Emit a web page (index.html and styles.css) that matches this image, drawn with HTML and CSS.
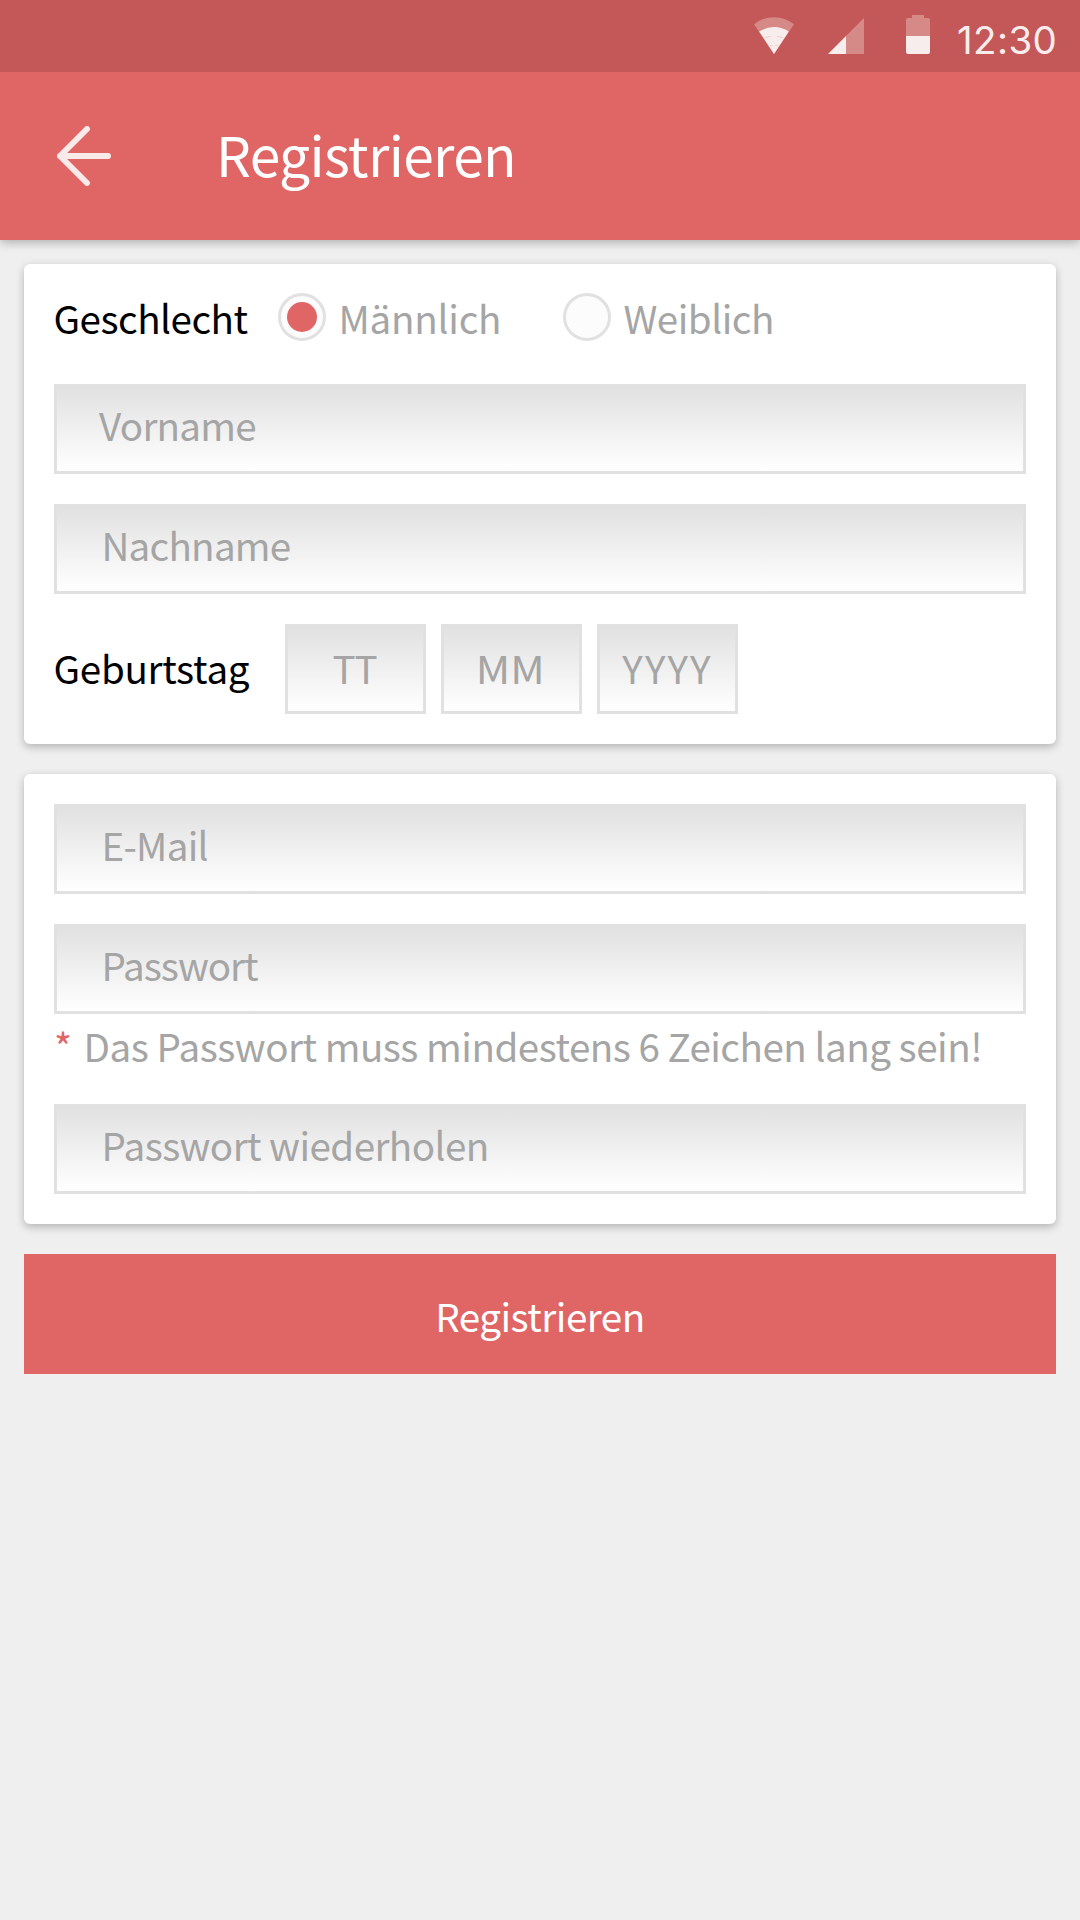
FILE: index.html
```html
<!DOCTYPE html>
<html lang="de">
<head>
<meta charset="utf-8">
<title>Registrieren</title>
<link rel="stylesheet" href="styles.css">
</head>
<body>
<div class="statusbar">
  <svg class="wifi" width="40" height="72" viewBox="0 0 40 72">
    <path class="dim" d="M0 24.3A32 32 0 0 1 40 24.3L20 54Z"/>
    <path class="lit" d="M5.2 31.6A26 26 0 0 1 34.8 31.6L20 54Z"/>
    <path class="wave" d="M10.5 38Q14 36.4 17 36.4M23 36.4Q26 36.4 29.5 38M15.5 46Q17 45.3 19 45.3M21 45.3Q23 45.3 24.5 46"/>
  </svg>
  <svg class="signal" width="36" height="72" viewBox="0 0 36 72">
    <path class="dim" d="M18 36L36 18V54H18Z"/>
    <path class="lit" d="M0 54L18 36V54Z"/>
  </svg>
  <svg class="battery" width="24" height="72" viewBox="0 0 24 72">
    <path class="dim" d="M6 15H18V18H22A2 2 0 0 1 24 20V36H0V20A2 2 0 0 1 2 18H6Z"/>
    <path class="lit" d="M0 36H24V52A2 2 0 0 1 22 54H2A2 2 0 0 1 0 52Z"/>
  </svg>
  <span class="clock">12:30</span>
</div>
<header class="toolbar">
  <svg class="back" width="54" height="60" viewBox="0 0 54 60">
    <path d="M30 3L3 30L30 57M3 30H51"/>
  </svg>
  <h1 class="title">Registrieren</h1>
</header>
<main class="form">
  <section class="card card-person">
    <div class="row gender">
      <span class="label label-gender">Geschlecht</span>
      <span class="radio checked"></span>
      <span class="option option-male">Männlich</span>
      <span class="radio"></span>
      <span class="option option-female">Weiblich</span>
    </div>
    <div class="field field-first"><span>Vorname</span></div>
    <div class="field field-last"><span>Nachname</span></div>
    <div class="row birthday">
      <span class="label label-birthday">Geburtstag</span>
      <div class="field date"><span class="day">TT</span></div>
      <div class="field date"><span class="month">MM</span></div>
      <div class="field date"><span class="year">YYYY</span></div>
    </div>
  </section>
  <section class="card card-account">
    <div class="field field-mail"><span>E-Mail</span></div>
    <div class="field field-password"><span>Passwort</span></div>
    <div class="hint"><span class="star">*</span><span class="hint-text">Das Passwort muss mindestens 6 Zeichen lang sein!</span></div>
    <div class="field field-repeat"><span>Passwort wiederholen</span></div>
  </section>
  <div class="submit" role="button">Registrieren</div>
</main>
</body>
</html>
```
FILE: styles.css
```css
* { box-sizing: border-box; }

body {
  margin: 0;
  width: 1080px;
  height: 1920px;
  overflow: hidden;
  background: #efefef;
  font-family: "Noto Sans CJK JP", "Noto Sans", sans-serif;
  font-size: 38.6px;
  letter-spacing: -0.5px;
  color: #a5a5a5;
  white-space: nowrap;
}

/* Status bar */
.statusbar {
  position: relative;
  z-index: 1;
  display: flex;
  height: 72px;
  padding-left: 754px;
  background: #c45757;
}
.signal { margin-left: 34px; }
.battery { margin-left: 42px; }
.dim { fill: #d58a88; }
.lit { fill: #f8eded; }
.wave { fill: none; stroke: #f1cfcf; stroke-width: 1; }
.clock {
  margin-left: 27px;
  font: 38.5px/80px Inter, sans-serif;
  letter-spacing: 0.4px;
  color: #f8eded;
}

/* Toolbar */
.toolbar {
  display: flex;
  height: 168px;
  padding: 0 0 0 57px;
  background: #e06565;
  box-shadow: 0 3px 9px rgba(0, 0, 0, 0.25);
}
.back {
  margin-top: 54px;
  fill: none;
  stroke: #f9eaea;
  stroke-width: 6;
  stroke-linecap: round;
  stroke-linejoin: round;
}
.title {
  margin: 0 0 0 105px;
  font-size: 55.1px;
  font-weight: 400;
  line-height: 163px;
  letter-spacing: -0.65px;
  color: #fff;
}

/* Cards */
.form {
  display: flex;
  flex-direction: column;
  gap: 30px;
  padding: 24px 24px 0;
}
.card {
  display: flex;
  flex-direction: column;
  gap: 30px;
  padding: 30px;
  border-radius: 6px;
  background: #fff;
  box-shadow: 0 3px 9px rgba(0, 0, 0, 0.25);
}
.card-person { padding-top: 29px; }
.row { display: flex; }

/* Gender */
.gender { height: 61px; line-height: 48px; }
.label { margin-left: -0.5px; color: #000; }
.label-gender { width: 224px; }
.radio {
  display: flex;
  align-items: center;
  justify-content: center;
  width: 48px;
  height: 48px;
  border: 3px solid #e1e1e1;
  border-radius: 50%;
  background: #fcfcfc;
}
.checked::before {
  content: "";
  width: 30px;
  height: 30px;
  border-radius: 50%;
  background: #e06565;
}
.option { padding-left: 13px; }
.option-male { width: 237px; letter-spacing: -0.25px; }

/* Fields */
.field {
  height: 90px;
  padding-left: 44.5px;
  border: 3px solid #e1e1e1;
  background: linear-gradient(#e1e1e1, #fff) padding-box;
  line-height: 75px;
}
.field-first { padding-left: 42px; letter-spacing: -0.76px; }
.field-last { letter-spacing: -0.77px; }
.field-mail { letter-spacing: -0.75px; }
.field-password { letter-spacing: -1px; }
.field-repeat { letter-spacing: -0.57px; }

/* Birthday */
.birthday { gap: 15px; line-height: 80px; }
.label-birthday { width: 216.5px; padding-top: 3px; letter-spacing: -0.28px; }
.date {
  width: 141px;
  padding: 0 2px 0 0;
  line-height: 80px;
  text-align: center;
}
.day { letter-spacing: -1px; }
.month { display: inline-block; transform: scaleX(1.1); letter-spacing: 0; }
.year { margin-left: 2px; letter-spacing: 2.1px; }

/* Password hint */
.hint { display: flex; height: 90px; margin: -30px 0; line-height: 62px; }
.star { width: 29.5px; color: #e06565; }

.submit {
  height: 120px;
  line-height: 122px;
  text-align: center;
  background: #e06565;
  color: #fff;
}
```
